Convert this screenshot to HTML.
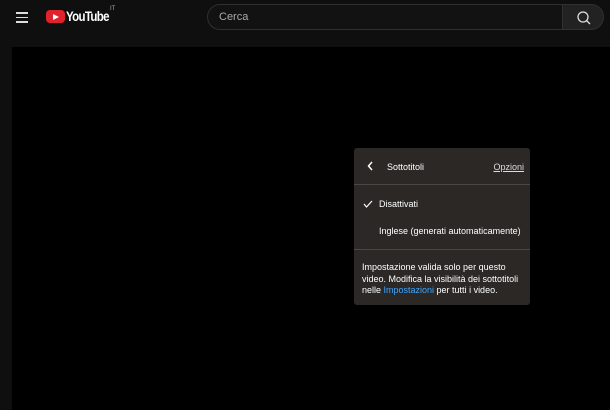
<!DOCTYPE html>
<html><head><style>
body{margin:0;width:610px;height:410px;background:#0f0f0f;overflow:hidden;position:relative;font-family:"Liberation Sans",sans-serif;color:#fff}
.vid{position:absolute;left:12px;top:47px;width:598px;height:363px;background:#000}
.search{position:absolute;left:207px;top:4px;width:355px;height:26px;border:1px solid #303030;border-right:none;border-radius:14px 0 0 14px;background:#121212;box-sizing:border-box}
.sbtn{position:absolute;left:562px;top:4px;width:42px;height:26px;background:#222;border:1px solid #303030;border-radius:0 14px 14px 0;box-sizing:border-box}
.panel{position:absolute;left:354px;top:148px;width:176px;height:157px;background:#2b2826;border-radius:3px;font-size:9px}
.hr{position:absolute;left:0;width:176px;height:1px;background:#4a4745}
</style></head><body>
<div style="position:absolute;left:16px;top:12px;width:12px;">
<div style="height:1.5px;background:#ddd;margin-bottom:3px"></div><div style="height:1.5px;background:#ddd;margin-bottom:3px"></div><div style="height:1.5px;background:#ddd"></div></div>
<div style="position:absolute;left:46px;top:10px;width:19px;height:13px;background:#e0232b;border-radius:4px"></div>
<div style="position:absolute;left:53px;top:13.5px;width:0;height:0;border-left:6px solid #fff;border-top:3.5px solid transparent;border-bottom:3.5px solid transparent"></div>
<div style="position:absolute;left:66px;top:8px;font-size:14px;font-weight:bold;letter-spacing:-0.8px;transform:scaleX(0.82);transform-origin:left">YouTube</div>
<div style="position:absolute;left:110px;top:6px;font-size:6px;color:#aaa">IT</div>
<div class="search"><span style="position:absolute;left:11px;top:6px;font-size:11px;color:#aaa">Cerca</span></div>
<div class="sbtn"><svg width="42" height="26" viewBox="0 0 42 26"><circle cx="20" cy="12" r="5" fill="none" stroke="#ddd" stroke-width="1.3"/><line x1="23.5" y1="15.5" x2="27" y2="19" stroke="#ddd" stroke-width="1.3"/></svg></div>
<div class="vid"></div>
<div class="panel">
<svg style="position:absolute;left:13px;top:13px" width="8" height="10"><path d="M5 1L1.5 5L5 9" stroke="#fff" stroke-width="1.5" fill="none"/></svg>
<div style="position:absolute;left:33px;top:14px">Sottotitoli</div>
<div style="position:absolute;right:6px;top:14px;text-decoration:underline;color:#ddd">Opzioni</div>
<div class="hr" style="top:36px"></div>
<svg style="position:absolute;left:9px;top:52px" width="10" height="8"><path d="M1 4L3.5 7L9 1" stroke="#fff" stroke-width="1.2" fill="none"/></svg>
<div style="position:absolute;left:25px;top:51px">Disattivati</div>
<div style="position:absolute;left:25px;top:78px">Inglese (generati automaticamente)</div>
<div class="hr" style="top:101px"></div>
<div style="position:absolute;left:8px;top:114px;line-height:11.5px;width:164px">Impostazione valida solo per questo video. Modifica la visibilità dei sottotitoli nelle <span style="color:#3ea6ff">Impostazioni</span> per tutti i video.</div>
</div>
</body></html>
